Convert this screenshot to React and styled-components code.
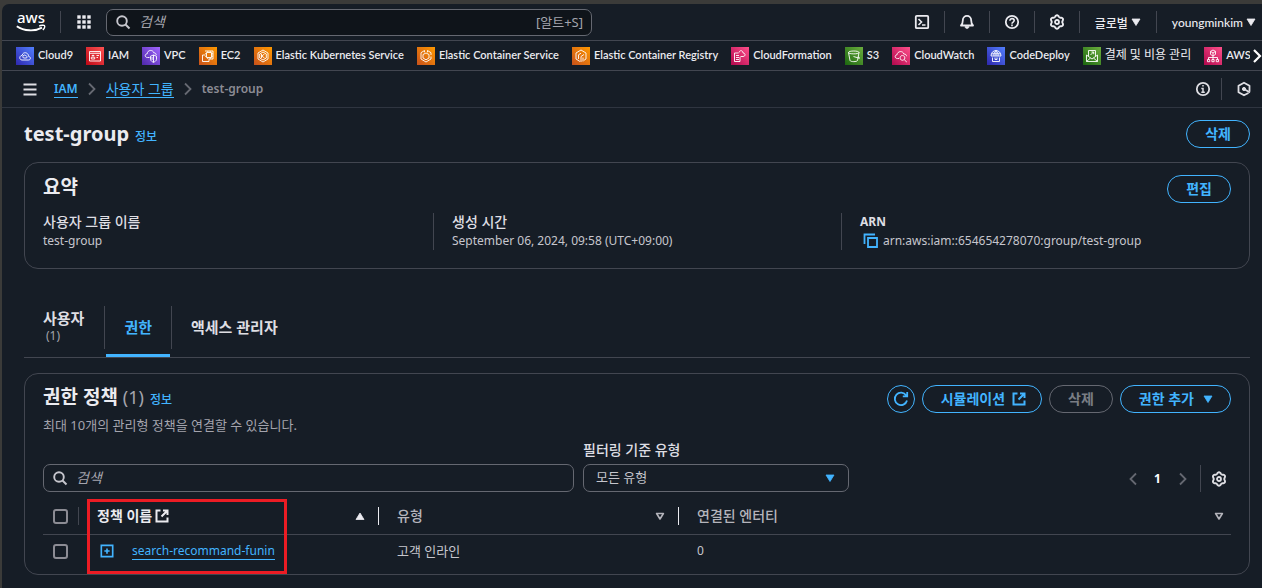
import styled, {createGlobalStyle, css} from "styled-components";

const GlobalStyle = createGlobalStyle`
  * {
    box-sizing: border-box;
  }

  body {
    margin: 0;
    background: #3b3b39;
    color: #c6c6cd;
    font-family: "Noto Sans", "Noto Sans CJK KR", sans-serif;
    font-size: 12px;
    line-height: 18px;
  }

  button, input, select {
    font-family: inherit;
    color: inherit;
  }
`;

const Page = styled.div`
  padding: 4px 0 0 2px;
`;

const Shell = styled.div`
  min-height: calc(100vh - 4px);
  background: #161d26;
  border-top-left-radius: 7px;
  overflow: hidden;
`;

const Icon = styled.svg`
  display: block;
  flex: none;
  width: ${({$size}) => $size || 16}px;
  height: ${({$size}) => $size || 16}px;
  fill: none;
  stroke: currentColor;
  stroke-width: 2;
`;

const PlainButton = styled.button`
  display: flex;
  align-items: center;
  justify-content: center;
  padding: 0;
  border: 0;
  background: none;
  cursor: pointer;
`;

/* top bar */
const TopBar = styled.header`
  display: flex;
  align-items: center;
  height: 37px;
  padding-left: 14px;
  border-bottom: 1px solid #424650;
  color: #ebebf0;
`;

const Logo = styled.svg`
  width: 30px;
  height: 26px;
  margin: 0 14px 6px 0;
`;

const LogoText = styled.text`
  font-family: "Noto Sans", sans-serif;
  font-size: 15px;
  font-weight: 500;
  fill: #fff;
`;

const AppsButton = styled(PlainButton)`
  width: 46px;
  height: 22px;
  border-left: 1px solid #424650;
`;

const TopSearch = styled.label`
  display: flex;
  align-items: center;
  flex: 0 1 486px;
  height: 27px;
  padding: 0 8px;
  gap: 8px;
  border: 1px solid #656871;
  border-radius: 7px;
  background: #0f141a;
  color: #c6c6cd;
  font-size: 13px;
`;

const SearchInput = styled.input`
  flex: 1;
  min-width: 0;
  padding: 0 0 2px;
  border: 0;
  outline: 0;
  background: none;
  font-size: 14px;

  &::placeholder {
    color: #a4a4ad;
    font-style: italic;
    opacity: 1;
  }
`;

const Shortcut = styled.span`
  color: #a4a4ad;
  white-space: nowrap;
`;

const TopActions = styled.nav`
  display: flex;
  align-items: center;
  margin-left: auto;
`;

const TopAction = styled(PlainButton)`
  width: 45px;
  height: 22px;
  border-left: 1px solid ${({$first}) => ($first ? "transparent" : "#424650")};
`;

const TopMenu = styled(PlainButton)`
  height: 22px;
  padding: 0 ${({$last}) => ($last ? 3 : 12)}px 0 15px;
  border-left: 1px solid #424650;
  font-family: Lato, "Noto Sans CJK KR", sans-serif;
  font-size: 12px;
  font-weight: 500;
`;

/* favorites */
const Favorites = styled.nav`
  display: flex;
  align-items: center;
  height: 30px;
  padding-left: 14px;
  border-bottom: 1px solid #424650;
`;

const FavoriteList = styled.div`
  display: flex;
  flex: 1;
  min-width: 0;
  gap: 13px;
  overflow: hidden;
`;

const Favorite = styled.a`
  display: flex;
  flex: none;
  align-items: flex-start;
  gap: 4px;
  color: #ebebf0;
  font-family: Lato, "Noto Sans CJK KR", sans-serif;
  font-size: ${({$korean}) => ($korean ? 12 : 11)}px;
  font-weight: ${({$korean}) => ($korean ? 400 : 600)};
  line-height: 16px;
  text-decoration: none;
  white-space: nowrap;
`;

const ScrollButton = styled(PlainButton)`
  width: 12px;
  height: 29px;
  color: #fff;
`;

/* breadcrumb bar */
const CrumbBar = styled.div`
  display: flex;
  align-items: center;
  height: 37px;
  padding-left: 20px;
  border-bottom: 1px solid #2f3540;
`;

const Crumbs = styled.ol`
  display: flex;
  align-items: center;
  gap: 6px;
  margin: 0 auto 0 16px;
  padding: 0;
  list-style: none;
`;

const Crumb = styled.li`
  display: flex;
  align-items: center;
  gap: 6px;
  color: #656871;
`;

const CrumbLink = styled.a`
  color: #42b4ff;
  font-size: ${({$korean}) => ($korean ? 14 : 12)}px;
  font-weight: ${({$korean}) => ($korean ? 400 : 600)};
  line-height: 16px;
  border-bottom: 1px solid #42b4ff;
  text-decoration: none;
`;

const CrumbCurrent = styled.span`
  color: #8c8c94;
  font-weight: 600;
`;

const CrumbAction = styled(PlainButton)`
  width: 41px;
  height: 22px;
  padding-left: 3px;
  color: #dedee3;
  border-left: 1px solid ${({$first}) => ($first ? "transparent" : "#424650")};
`;

/* content */
const Content = styled.main`
  padding: 12px 12px 13px 22px;
`;

const TitleRow = styled.div`
  display: flex;
  align-items: flex-start;
  justify-content: space-between;
`;

const Title = styled.h1`
  margin: 0;
  color: #ebebf0;
  font-size: 20px;
  font-weight: 700;
  line-height: 27px;
`;

const SectionTitle = styled.h2`
  margin: 0;
  color: #ebebf0;
  font-size: 19px;
  font-weight: 700;
  line-height: 24px;
`;

const Count = styled.span`
  color: #a4a4ad;
  font-size: 18px;
  font-weight: 400;
`;

const InfoLink = styled.a`
  margin-left: 6px;
  color: #42b4ff;
  font-size: 12px;
  font-weight: 500;
  text-decoration: none;
`;

const Button = styled.button`
  display: flex;
  align-items: center;
  justify-content: center;
  height: 28px;
  gap: 6px;
  padding: 0 ${({$icon}) => ($icon ? 5 : 18)}px;
  border: 1px solid ${({disabled}) => (disabled ? "#656871" : "#42b4ff")};
  border-radius: 14px;
  background: none;
  color: ${({disabled}) => (disabled ? "#7a7d85" : "#42b4ff")};
  font-size: 14px;
  font-weight: 700;
  white-space: nowrap;
  cursor: pointer;

  & > svg {
    margin-right: ${({$icon}) => ($icon ? 0 : -4)}px;
  }
`;

const ButtonText = styled.span`
  padding-bottom: 2px;
`;

const Card = styled.section`
  padding: ${({$pad}) => $pad};
  border: 1px solid #424650;
  border-radius: 14px;
`;

const SummaryCard = styled(Card)`
  margin-top: 12px;
`;

const Summary = styled.dl`
  display: grid;
  grid-template-columns: repeat(3, 1fr);
  gap: 36px;
  margin: 10px 0 0;
`;

const SummaryItem = styled.div`
  ${({$divided}) => $divided && css`
    margin-left: -18px;
    padding-left: 18px;
    border-left: 1px solid #424650;
  `}
`;

const Label = styled.dt`
  color: #dedee3;
  font-size: ${({$latin}) => ($latin ? 12 : 14)}px;
  font-weight: ${({$latin}) => ($latin ? 700 : 500)};
  line-height: 18px;
`;

const Value = styled.dd`
  display: flex;
  align-items: center;
  gap: 4px;
  margin: 0;
  line-height: 19px;
`;

const CopyButton = styled(PlainButton)`
  margin-left: 3px;
  color: #42b4ff;
`;

/* tabs */
const Tabs = styled.div`
  display: flex;
  align-items: stretch;
  height: 56px;
  margin-top: 33px;
  border-bottom: 1px solid #424650;
`;

const TabButton = styled.button`
  display: flex;
  flex-direction: column;
  align-items: flex-start;
  justify-content: center;
  height: 55px;
  padding: 0 18px 2px;
  border: 0;
  border-bottom: 3px solid ${({$active}) => ($active ? "#42b4ff" : "transparent")};
  background: none;
  color: ${({$active}) => ($active ? "#42b4ff" : "#dedee3")};
  font-size: 15px;
  font-weight: 700;
  line-height: 18px;

  &:first-child {
    padding: 0 19px 2px;
  }
`;

const TabDivider = styled.span`
  width: 1px;
  height: 43px;
  margin: 4px 1px 0;
  background: #424650;
`;

const TabCount = styled.span`
  padding-left: 3px;
  color: #a4a4ad;
  font-size: 12px;
  font-weight: 400;
`;

/* policies */
const PolicyCard = styled(Card)`
  margin-top: 15px;
`;

const Actions = styled.div`
  display: flex;
  gap: 7px;
`;

const Description = styled.p`
  margin: 2px 0 0;
  color: #a4a4ad;
  font-size: 13px;
  line-height: 22px;
`;

const Tools = styled.div`
  display: flex;
  align-items: flex-end;
  margin-top: 4px;
`;

const FilterInput = styled.label`
  display: flex;
  align-items: center;
  flex: 0 1 531px;
  height: 28px;
  gap: 8px;
  padding: 0 8px;
  border: 1px solid #656871;
  border-radius: 7px;
`;

const FilterSelect = styled.div`
  flex: 0 1 266px;
  margin-left: 9px;
`;

const FilterLabel = styled.label`
  display: block;
  margin-bottom: 4px;
  color: #dedee3;
  font-size: 14px;
  font-weight: 500;
  line-height: 20px;
`;

const SelectBox = styled.div`
  display: grid;
  align-items: center;

  & > * {
    grid-area: 1 / 1;
  }

  & > svg {
    justify-self: end;
    margin-right: 11px;
    color: #42b4ff;
    pointer-events: none;
  }
`;

const Select = styled.select`
  appearance: none;
  width: 100%;
  height: 28px;
  padding: 0 12px 2px;
  border: 1px solid #656871;
  border-radius: 7px;
  background: transparent;
  font-size: 13px;
`;

const Pager = styled.div`
  display: flex;
  align-items: center;
  height: 27px;
  margin-left: auto;
  color: #656871;
`;

const PagerButton = styled(PlainButton)`
  width: 25px;
  height: 27px;
  color: ${({$current}) => ($current ? "#fff" : "#656871")};
  font-size: 12px;
  font-weight: 700;
`;

const GearButton = styled(PlainButton)`
  width: 31px;
  height: 27px;
  margin-left: 5px;
  padding-left: 5px;
  border-left: 1px solid #424650;
  color: #dedee3;
`;

const TableWrap = styled.div`
  position: relative;
  margin-top: 7px;
`;

const Table = styled.table`
  width: 100%;
  table-layout: fixed;
  border-collapse: collapse;
`;

const SelectCol = styled.col`
  width: 36px;
`;

const DataCol = styled.col`
  width: 300px;
`;

const HeadCell = styled.th`
  height: 35px;
  padding: 0;
  border-bottom: 1px solid #424650;
  text-align: left;
`;

const HeadContent = styled.div`
  display: flex;
  align-items: center;
  justify-content: space-between;
  height: 18px;
  padding: 0 ${({$last}) => ($last ? 3 : 10)}px 0 18px;
  border-right: 1px solid ${({$last}) => ($last ? "transparent" : "#ebebf0")};
  color: ${({$sorted}) => ($sorted ? "#ebebf0" : "#b4b4bb")};
  font-size: 14px;
  font-weight: ${({$sorted}) => ($sorted ? 700 : 500)};
`;

const HeadText = styled.span`
  display: flex;
  align-items: center;
  gap: 2px;
`;

const CheckContent = styled.div`
  display: flex;
  align-items: center;
  height: 18px;
  padding-left: 10px;
  border-right: 1px solid ${({$head}) => ($head ? "#424650" : "transparent")};
`;

const Cell = styled.td`
  height: 34px;
  padding: 0 0 0 ${({$check}) => ($check ? 0 : 18)}px;
  font-size: ${({$korean}) => ($korean ? 13 : 12)}px;
`;

const Check = styled.input`
  appearance: none;
  width: 15px;
  height: 15px;
  margin: 0;
  border: 2px solid #8c8c94;
  border-radius: 3px;
`;

const PolicyName = styled.div`
  display: flex;
  align-items: center;
  gap: 18px;
  padding-left: 3px;
`;

const ExpandButton = styled(PlainButton)`
  color: #42b4ff;
`;

const PolicyLink = styled.a`
  color: #42b4ff;
  line-height: 16px;
  border-bottom: 1px solid #42b4ff;
  text-decoration: none;
`;

const Marker = styled.div`
  position: absolute;
  top: 0;
  left: 44px;
  width: 200px;
  height: 75px;
  border: 3px solid #ec1c24;
  pointer-events: none;
`;

/* icons */
const gearPath = Array.from({length: 72}, (_, i) => {
    const angle = (i * 5 * Math.PI) / 180;
    const radius = 6 + 0.75 * Math.cos(6 * angle);
    const x = 8 + radius * Math.sin(angle);
    const y = 8 - radius * Math.cos(angle);
    return `${i ? "L" : "M"}${x.toFixed(2)} ${y.toFixed(2)}`;
}).join("") + "Z";

function GearIcon() {
    return (
        <Icon viewBox="0 0 16 16">
            <path d={gearPath} strokeWidth="1.9"/>
            <circle cx="8" cy="8" r="2" strokeWidth="1.8"/>
        </Icon>
    );
}

function SearchIcon() {
    return (
        <Icon viewBox="0 0 16 16">
            <circle cx="7" cy="7" r="4.8" strokeWidth="1.9"/>
            <path d="M10.5 10.5L14.5 14.5"/>
        </Icon>
    );
}

function ExternalIcon() {
    return (
        <Icon viewBox="0 0 16 16">
            <path d="M6.5 2.5H2.5V13.5H13.5V9.5M9 2.5H13.5V7M13 3L7.5 8.5"/>
        </Icon>
    );
}

function ChevronIcon({left}) {
    return (
        <Icon viewBox="0 0 16 16">
            <path d={left ? "M11 2.5L5.5 8L11 13.5" : "M5 2.5L10.5 8L5 13.5"} strokeWidth="1.8"/>
        </Icon>
    );
}

function Caret({up, hollow}) {
    return (
        <Icon viewBox="0 0 16 16">
            <path
                d={up ? "M4 11.5L8 5L12 11.5Z" : hollow ? "M4.6 5.5H11.4L8 11Z" : "M4 5L8 11.5L12 5Z"}
                fill={hollow ? "none" : "currentColor"}
                strokeWidth={hollow ? 1.6 : 0.8}
                strokeLinejoin="round"
            />
        </Icon>
    );
}

const gradients = {
    blue: ["#2e27ad", "#527fff"],
    red: ["#bd0816", "#ff5252"],
    purple: ["#4d27a8", "#a166ff"],
    orange: ["#c8511b", "#ff9900"],
    pink: ["#b0084d", "#ff4f8b"],
    green: ["#1b660f", "#6cae3e"],
};

const ServiceTile = styled.span`
  display: block;
  width: 18px;
  height: 18px;
  background: linear-gradient(45deg, ${({$from}) => $from}, ${({$to}) => $to});
`;

const ServiceGlyph = styled.svg`
  display: block;
  width: 18px;
  height: 18px;
  fill: none;
  stroke: #fff;
  stroke-width: 0.9;
`;

const hexagon = "M9 3L14 6V12L9 15L4 12V6Z";

const services = [
    {name: "Cloud9", color: "blue", d: "M6 13H12.5C15 13 15 9.6 12.6 9.4C12.5 5 6.6 4.4 6.2 8.4C3 8.5 3 13 6 13M7.5 11A1.6 1.6 0 0 1 9.4 8.4A1.6 1.6 0 0 1 10.6 11Z"},
    {name: "IAM", color: "red", d: "M3.5 4.5H14.5V14H3.5ZM3.5 6.3H14.5M5.3 12V10.2H8.7V12ZM7 7.7V9.5M10.5 8.5H13M10.5 10.5H12M5.7 8.5H8.3"},
    {name: "VPC", color: "purple", d: "M7.5 10.5H5.5C2.5 10.5 2.5 7 5.2 6.8C5.5 2.5 11 2.5 11.8 5.8C13.5 5.8 14.2 6.8 14.2 8M11.5 8L14.5 9.2V12.3C14.5 13.8 12.5 15 11.5 15.3C10.5 15 8.5 13.8 8.5 12.3V9.2ZM11.5 8V15.3M10 10V13"},
    {name: "EC2", color: "orange", d: "M7.5 5.5H12.5V10.5H7.5ZM8.8 4V5.5M11.2 4V5.5M12.5 6.8H14M12.5 9.2H14M8.8 10.5V12M11.2 10.5V12M6 6.8H7.5M6 9.2H7.5M6 8H3.5V14.5H10V12M6 4H14V12H10"},
    {name: "Elastic Kubernetes Service", color: "orange", d: `${hexagon}M9 5L12.3 7V11L9 13L5.7 11V7ZM7.5 7V11M10.5 7L7.7 9L10.5 11`},
    {name: "Elastic Container Service", color: "orange", d: "M9 6L12 7.5V11L9 12.8L6 11V7.5ZM7.5 3.5L4 5.7V12L9 15L14 12V9.5M10.5 3.5L14 5.7V8M7.5 3.5V5.3M10.5 3.5V5.3"},
    {name: "Elastic Container Registry", color: "orange", d: "M8 14.5L4 12V6L9 3L14 6V12L12 13.3M9 15V9.5L12 7.5M11 14.5V10.5M6.5 12V7.8L9 6.2"},
    {name: "CloudFormation", color: "pink", d: "M3.5 6H7.5M3.5 6V14.5H9V10M5 8.5H8M5 10.5H8M5 12.5H8M8 5.5C9 2.5 12 3.5 12 6C14.7 6 14.7 9.5 12 9.5H9.5"},
    {name: "S3", color: "green", d: "M3.5 5.5C3.5 3.5 14 3.5 14 5.5C14 7.3 3.5 7.3 3.5 5.5L5 13.5C5.5 15 12 15 12.5 13.5L14 5.5M8.5 9.5L14.5 11.3C14.8 10.5 13.7 10 13 9.8"},
    {name: "CloudWatch", color: "pink", d: "M7 11.5H5.5C2.5 11.5 2.5 8 5 7.8C5.5 3.8 11 3.5 11.8 7C13.8 7 14.5 8 14.5 9.2M10.5 8.5A2.4 2.4 0 1 1 10.4 8.5M12.3 12.8L14.8 15"},
    {name: "CodeDeploy", color: "blue", d: "M4 9C4 1.8 14 1.8 14 9ZM9 3.6V9M7 9C6.5 6.5 7.3 5 9 3.6C10.7 5 11.5 6.5 11 9M4.5 6.8H13.5M5.5 10.5V14.5H12.5V10.5M8 10.5V12.5H10V10.5"},
    {name: "결제 및 비용 관리", color: "green", korean: true, d: "M3.5 8V14.5H14.5V8M3.5 8L9 12L14.5 8M3.5 14.5L7.5 11M14.5 14.5L10.5 11M5.5 9V3.5H12.5V9M7.5 8L10.5 5M8.5 5H10.7V7.2"},
    {name: "AWS", color: "pink", d: "M9 3L11.5 4.4V7.4L9 9L6.5 7.4V4.4ZM6.5 4.4L9 6L11.5 4.4M9 6V12.5M4.5 12.5V10.5H13.5V12.5M3.5 12.5H5.7V14.7H3.5ZM7.9 12.5H10.1V14.7H7.9ZM12.3 12.5H14.5V14.7H12.3Z"},
];

function Header() {
    return (
        <TopBar>
            <Logo viewBox="0 -6 30 26" role="img" aria-label="aws">
                <LogoText x="1" y="10.5">aws</LogoText>
                <path d="M0.8 14.2C8 19.3 19 19.6 26 15.6" fill="none" stroke="#fff" strokeWidth="1.9"/>
                <path d="M23.2 14.2C25 13.1 28 13 28.5 13.7C28.9 14.5 28.2 16.7 26.9 18" fill="none" stroke="#fff" strokeWidth="1.4"/>
            </Logo>

            <AppsButton aria-label="서비스">
                <Icon viewBox="0 0 16 16" stroke="none">
                    <path
                        d="M1 1H5V5H1ZM6 1H10V5H6ZM11 1H15V5H11ZM1 6H5V10H1ZM6 6H10V10H6ZM11 6H15V10H11ZM1 11H5V15H1ZM6 11H10V15H6ZM11 11H15V15H11Z"
                        fill="currentColor" stroke="#161d26" strokeWidth="0.6"
                    />
                </Icon>
            </AppsButton>

            <TopSearch>
                <SearchIcon/>
                <SearchInput type="text" placeholder="검색" aria-label="검색"/>
                <Shortcut>[알트+S]</Shortcut>
            </TopSearch>

            <TopActions>
                <TopAction $first aria-label="CloudShell">
                    <Icon viewBox="0 0 16 16">
                        <rect x="1.8" y="1.8" width="12.4" height="12.4" rx="1" strokeWidth="1.8"/>
                        <path d="M4.5 5L7.5 8L4.5 11M8 11H11.5" strokeWidth="1.6"/>
                    </Icon>
                </TopAction>
                <TopAction aria-label="알림">
                    <Icon viewBox="0 0 16 16">
                        <path d="M2 11.5H14C12.3 9.8 12.2 8.5 12.2 6.5C12.2 0.4 3.8 0.4 3.8 6.5C3.8 8.5 3.7 9.8 2 11.5Z" strokeWidth="1.8" strokeLinejoin="round"/>
                        <path d="M6 12.5C6 15.3 10 15.3 10 12.5Z" fill="currentColor" strokeWidth="0.6"/>
                    </Icon>
                </TopAction>
                <TopAction aria-label="지원">
                    <Icon viewBox="0 0 16 16">
                        <circle cx="8" cy="8" r="6.2" strokeWidth="1.8"/>
                        <path d="M5.9 6.7C5.9 3.9 10.2 4.1 10.2 6.6C10.2 8.1 8 8 8 9.7M8 10.6V12.2" strokeWidth="1.6"/>
                    </Icon>
                </TopAction>
                <TopAction aria-label="설정">
                    <GearIcon/>
                </TopAction>
                <TopMenu>글로벌 <Caret/></TopMenu>
                <TopMenu $last>youngminkim <Caret/></TopMenu>
            </TopActions>
        </TopBar>
    );
}

function FavoriteBar() {
    return (
        <Favorites>
            <FavoriteList>
                {services.map(({name, color, korean, d}) => (
                    <Favorite href="#" key={name} $korean={korean}>
                        <ServiceTile $from={gradients[color][0]} $to={gradients[color][1]}>
                            <ServiceGlyph viewBox="0 0 18 18"><path d={d}/></ServiceGlyph>
                        </ServiceTile>
                        {name}
                    </Favorite>
                ))}
            </FavoriteList>
            <ScrollButton aria-label="다음">
                <Icon viewBox="0 0 16 16">
                    <path d="M6 2L12 8L6 14" strokeWidth="2.2"/>
                </Icon>
            </ScrollButton>
        </Favorites>
    );
}

function BreadcrumbBar() {
    return (
        <CrumbBar>
            <PlainButton aria-label="메뉴">
                <Icon viewBox="0 0 16 16">
                    <path d="M1.5 3.5H14.5M1.5 8.5H14.5M1.5 13.5H14.5" stroke="#dedee3" strokeWidth="1.8"/>
                </Icon>
            </PlainButton>
            <Crumbs>
                <Crumb><CrumbLink href="#">IAM</CrumbLink><ChevronIcon/></Crumb>
                <Crumb><CrumbLink href="#" $korean>사용자 그룹</CrumbLink><ChevronIcon/></Crumb>
                <Crumb><CrumbCurrent>test-group</CrumbCurrent></Crumb>
            </Crumbs>
            <CrumbAction $first aria-label="정보">
                <Icon viewBox="0 0 16 16">
                    <circle cx="8" cy="8" r="6.2" strokeWidth="1.8"/>
                    <path d="M8 4V5.6M6.3 7.5H8V11.5M6.3 11.3H9.8" strokeWidth="1.5"/>
                </Icon>
            </CrumbAction>
            <CrumbAction aria-label="도구">
                <Icon viewBox="0 0 16 16">
                    <path d="M12.5 12L8 14.3L2.5 11.2V4.8L8 1.7L13.5 4.8V10.5" strokeWidth="1.8" strokeLinejoin="round"/>
                    <circle cx="8" cy="8" r="1.6" fill="currentColor" strokeWidth="1"/>
                    <path d="M8 8L14 11.5" strokeWidth="1.8"/>
                </Icon>
            </CrumbAction>
        </CrumbBar>
    );
}

function GroupSummary() {
    return (
        <SummaryCard $pad="12px 18px 18px">
            <TitleRow>
                <SectionTitle>요약</SectionTitle>
                <Button><ButtonText>편집</ButtonText></Button>
            </TitleRow>
            <Summary>
                <SummaryItem>
                    <Label>사용자 그룹 이름</Label>
                    <Value>test-group</Value>
                </SummaryItem>
                <SummaryItem $divided>
                    <Label>생성 시간</Label>
                    <Value>September 06, 2024, 09:58 (UTC+09:00)</Value>
                </SummaryItem>
                <SummaryItem $divided>
                    <Label $latin>ARN</Label>
                    <Value>
                        <CopyButton aria-label="복사">
                            <Icon viewBox="0 0 16 16">
                                <path d="M1.5 11V1.5H12M5 5H14V14H5Z" strokeWidth="1.8"/>
                            </Icon>
                        </CopyButton>
                        arn:aws:iam::654654278070:group/test-group
                    </Value>
                </SummaryItem>
            </Summary>
        </SummaryCard>
    );
}

function GroupTabs() {
    return (
        <Tabs role="tablist">
            <TabButton role="tab">사용자<TabCount>(1)</TabCount></TabButton>
            <TabDivider/>
            <TabButton role="tab" $active>권한</TabButton>
            <TabDivider/>
            <TabButton role="tab">액세스 관리자</TabButton>
        </Tabs>
    );
}

function PolicyTable() {
    return (
        <TableWrap>
            <Table>
                <colgroup>
                    <SelectCol/>
                    <DataCol/>
                    <DataCol/>
                    <col/>
                </colgroup>
                <thead>
                    <tr>
                        <HeadCell>
                            <CheckContent $head><Check type="checkbox" aria-label="모두 선택"/></CheckContent>
                        </HeadCell>
                        <HeadCell>
                            <HeadContent $sorted>
                                <HeadText>정책 이름 <ExternalIcon/></HeadText>
                                <Caret up/>
                            </HeadContent>
                        </HeadCell>
                        <HeadCell>
                            <HeadContent>유형 <Caret hollow/></HeadContent>
                        </HeadCell>
                        <HeadCell>
                            <HeadContent $last>연결된 엔터티 <Caret hollow/></HeadContent>
                        </HeadCell>
                    </tr>
                </thead>
                <tbody>
                    <tr>
                        <Cell $check>
                            <CheckContent><Check type="checkbox" aria-label="search-recommand-funin"/></CheckContent>
                        </Cell>
                        <Cell>
                            <PolicyName>
                                <ExpandButton aria-label="확장">
                                    <Icon viewBox="0 0 16 16" $size={14}>
                                        <path d="M1.5 1.5H14.5V14.5H1.5ZM8 5V11M5 8H11" strokeWidth="1.9"/>
                                    </Icon>
                                </ExpandButton>
                                <PolicyLink href="#">search-recommand-funin</PolicyLink>
                            </PolicyName>
                        </Cell>
                        <Cell $korean>고객 인라인</Cell>
                        <Cell>0</Cell>
                    </tr>
                </tbody>
            </Table>
            <Marker/>
        </TableWrap>
    );
}

function Policies() {
    return (
        <PolicyCard $pad="11px 18px 6px">
            <TitleRow>
                <div>
                    <SectionTitle>
                        권한 정책 <Count>(1)</Count><InfoLink href="#">정보</InfoLink>
                    </SectionTitle>
                    <Description>최대 10개의 관리형 정책을 연결할 수 있습니다.</Description>
                </div>
                <Actions>
                    <Button $icon aria-label="새로 고침">
                        <Icon viewBox="0 0 16 16">
                            <path d="M14 9.5A6.2 6.2 0 1 1 13.2 4.5M14.2 1V5.3H9.8" strokeWidth="1.8"/>
                        </Icon>
                    </Button>
                    <Button><ButtonText>시뮬레이션</ButtonText><ExternalIcon/></Button>
                    <Button disabled><ButtonText>삭제</ButtonText></Button>
                    <Button><ButtonText>권한 추가</ButtonText><Caret/></Button>
                </Actions>
            </TitleRow>

            <Tools>
                <FilterInput>
                    <SearchIcon/>
                    <SearchInput type="text" placeholder="검색" aria-label="정책 검색"/>
                </FilterInput>
                <FilterSelect>
                    <FilterLabel htmlFor="policy-type">필터링 기준 유형</FilterLabel>
                    <SelectBox>
                        <Select id="policy-type">
                            <option>모든 유형</option>
                        </Select>
                        <Caret/>
                    </SelectBox>
                </FilterSelect>
                <Pager>
                    <PagerButton aria-label="이전"><ChevronIcon left/></PagerButton>
                    <PagerButton $current>1</PagerButton>
                    <PagerButton aria-label="다음"><ChevronIcon/></PagerButton>
                    <GearButton aria-label="기본 설정"><GearIcon/></GearButton>
                </Pager>
            </Tools>

            <PolicyTable/>
        </PolicyCard>
    );
}

function App() {
    return (
        <Page>
            <GlobalStyle/>
            <Shell>
                <Header/>
                <FavoriteBar/>
                <BreadcrumbBar/>
                <Content>
                    <TitleRow>
                        <Title>test-group<InfoLink href="#">정보</InfoLink></Title>
                        <Button><ButtonText>삭제</ButtonText></Button>
                    </TitleRow>
                    <GroupSummary/>
                    <GroupTabs/>
                    <Policies/>
                </Content>
            </Shell>
        </Page>
    );
}

export default App;
